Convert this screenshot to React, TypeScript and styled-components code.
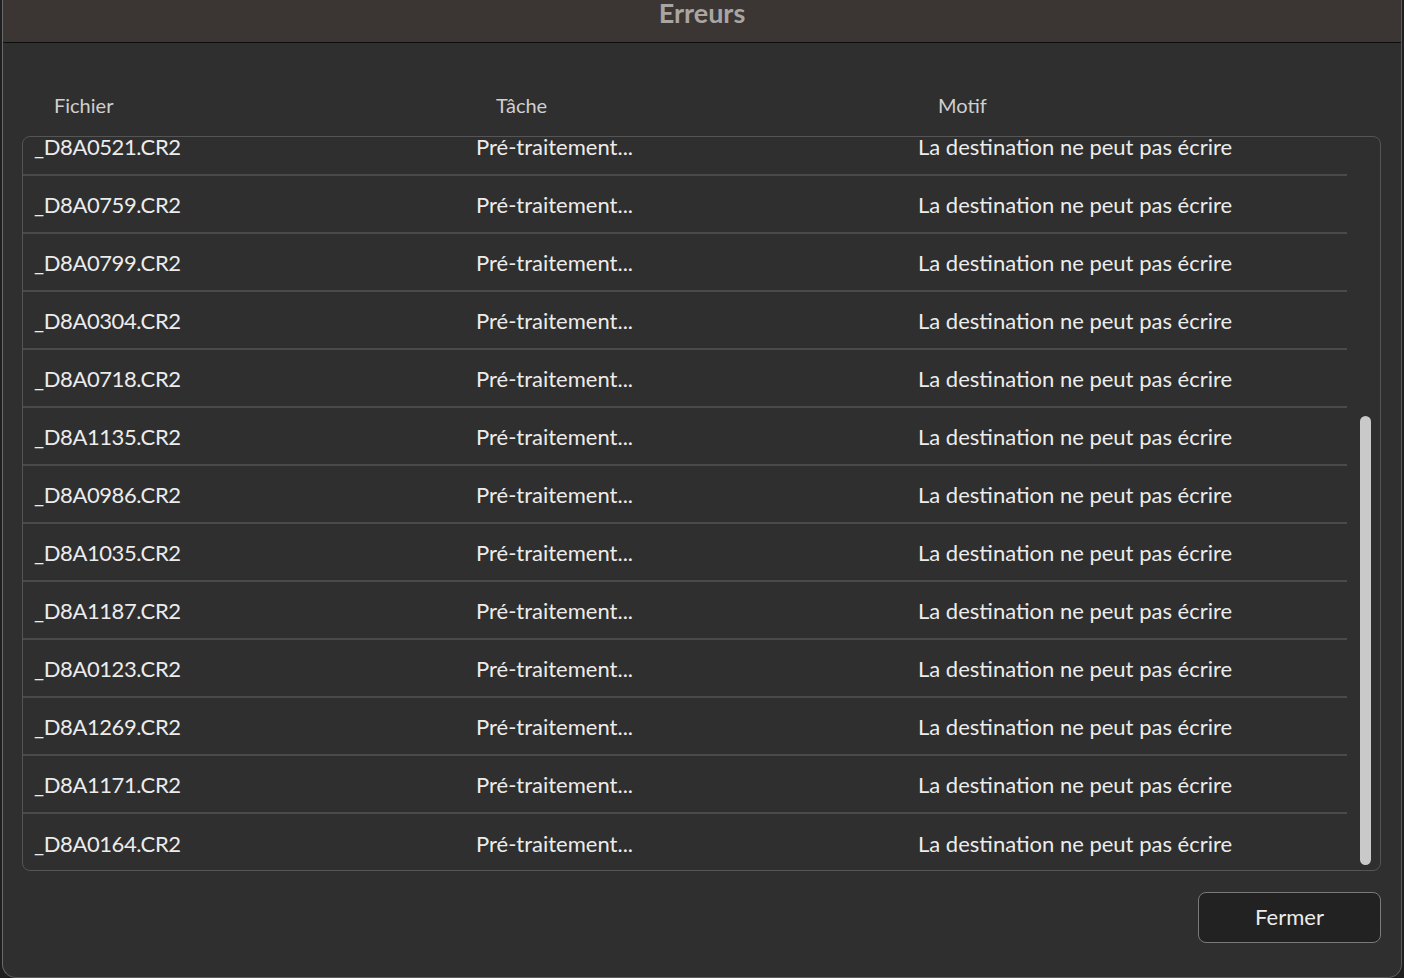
import React from 'react';
import styled, {createGlobalStyle} from "styled-components";

const GlobalStyle = createGlobalStyle`
  html, body {
    margin: 0;
    padding: 0;
    background: #1f1f1f;
    overflow: hidden;
  }
  * {
    box-sizing: border-box;
  }
`

const Window = styled.div`
  margin-left: 2px;
  width: 1400px;
  height: 978px;
  background-color: #2f2f2f;
  border-left: 1px solid #6a6a6a;
  border-right: 1px solid #5a5a5a;
  border-bottom: 1px solid #5a5a5a;
  border-radius: 0 0 14px 14px;
  display: flex;
  flex-direction: column;
  font-family: Lato, "Open Sans", sans-serif;
  overflow: hidden;
`
const TitleBar = styled.div`
  height: 43px;
  flex-shrink: 0;
  background-color: #3b3533;
  border-bottom: 1px solid #0d0d0d;
  display: flex;
  justify-content: center;
`
const Title = styled.h1`
  margin: 0;
  font-size: 27px;
  line-height: 25px;
  font-weight: 700;
  color: #a9a5a3;
`
const Content = styled.div`
  padding: 0 20px 0 19px;
  display: flex;
  flex-direction: column;
`
const HeaderRow = styled.div`
  display: grid;
  grid-template-columns: 442px 442px 1fr;
  padding: 49px 0 0 32px;
  height: 93px;
`
const HeaderCell = styled.span`
  font-size: 20px;
  line-height: 26px;
  color: #d0d0d0;
`
const Table = styled.div`
  position: relative;
  height: 735px;
  border: 1px solid #555;
  border-radius: 8px;
  overflow: hidden;
`
const Rows = styled.ul`
  list-style: none;
  margin: -19px 0 0 0;
  padding: 0 33px 0 0;
`
const Row = styled.li<{ $last?: boolean }>`
  display: grid;
  grid-template-columns: 442px 442px 1fr;
  height: 58px;
  align-items: center;
  padding-left: 11px;
  padding-top: 1px;
  border-bottom: ${p => p.$last ? 'none' : '2px solid #4a4a4a'};
`
const Cell = styled.span`
  font-size: 22px;
  color: #ececec;
  white-space: nowrap;
`
const FileName = styled(Cell)`
  letter-spacing: -0.4px;
`
const ScrollThumb = styled.div`
  position: absolute;
  right: 9px;
  top: 279px;
  width: 11px;
  height: 449px;
  border-radius: 6px;
  background-color: #c9c9c9;
`
const Footer = styled.div`
  display: flex;
  justify-content: flex-end;
  padding-top: 21px;
`
const Button = styled.button`
  width: 183px;
  height: 51px;
  padding-bottom: 4px;
  border-radius: 8px;
  border: 1px solid #7a7a7a;
  background-color: #222;
  color: #ececec;
  font-family: Lato, "Open Sans", sans-serif;
  font-size: 22px;
  cursor: pointer;
`

const files = [
    '_D8A0521.CR2', '_D8A0759.CR2', '_D8A0799.CR2', '_D8A0304.CR2', '_D8A0718.CR2',
    '_D8A1135.CR2', '_D8A0986.CR2', '_D8A1035.CR2', '_D8A1187.CR2', '_D8A0123.CR2',
    '_D8A1269.CR2', '_D8A1171.CR2', '_D8A0164.CR2',
]

const App: React.FC = () => {
    return (
        <>
            <GlobalStyle/>
            <Window>
                <TitleBar><Title>Erreurs</Title></TitleBar>
                <Content>
                    <HeaderRow>
                        <HeaderCell>Fichier</HeaderCell>
                        <HeaderCell>Tâche</HeaderCell>
                        <HeaderCell>Motif</HeaderCell>
                    </HeaderRow>
                    <Table>
                        <Rows>
                            {files.map((f, i) => (
                                <Row key={f} $last={i === files.length - 1}>
                                    <FileName>{f}</FileName>
                                    <Cell>Pré-traitement...</Cell>
                                    <Cell>La destination ne peut pas écrire</Cell>
                                </Row>
                            ))}
                        </Rows>
                        <ScrollThumb/>
                    </Table>
                    <Footer>
                        <Button>Fermer</Button>
                    </Footer>
                </Content>
            </Window>
        </>
    );
};

export default App;
